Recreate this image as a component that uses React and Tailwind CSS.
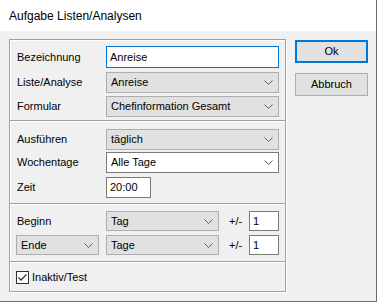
import React from 'react';

const Chevron = () => (
    <svg width="9" height="5" viewBox="0 0 9 5" className="shrink-0">
        <polyline points="0.5,0.5 4.5,4.5 8.5,0.5" fill="none" stroke="#606060" strokeWidth="1" />
    </svg>
);

const Select = ({ value, className = '', white = false }) => (
    <div
        className={`flex items-center justify-between pl-[4px] pr-[5px] border ${
            white ? 'bg-white border-[#7a7a7a]' : 'bg-[#e1e1e1] border-[#adadad]'
        } ${className}`}
    >
        <span className="leading-none">{value}</span>
        <Chevron />
    </div>
);

const Input = ({ value, className = '', focused = false }) => (
    <div
        className={`flex items-center pl-[3px] bg-white border ${
            focused ? 'border-[#0078d7]' : 'border-[#7a7a7a]'
        } ${className}`}
    >
        <span className="leading-none">{value}</span>
    </div>
);

const Separator = ({ className = '' }) => (
    <div className={`h-[2px] border-t border-[#a0a0a0] border-b border-b-white ${className}`} />
);

const Row = ({ label, children, className = '' }) => (
    <div className={`flex items-center ${className}`}>
        <span className="w-[90px] pl-[1px] shrink-0">{label}</span>
        {children}
    </div>
);

const App = () => {
    return (
        <div
            className="w-[377px] h-[302px] flex flex-col bg-[#f0f0f0] border-r border-b border-[#6b6b6b] text-[11px] text-black"
            style={{ fontFamily: '"Liberation Sans", Arial, sans-serif' }}
        >
            {/* Title */}
            <div className="h-[31px] shrink-0 bg-white flex items-center pl-[9px] text-[12px]">
                Aufgabe Listen/Analysen
            </div>

            {/* Body */}
            <div className="flex items-start pt-[8px] pl-[9px]">
                <div className="w-[277px] h-[253px] border border-[#a0a0a0] shadow-[inset_1px_1px_0_#fff,1px_1px_0_#fff] flex flex-col">
                    <div className="flex flex-col pl-[6px] pr-[6px] pt-[6px]">
                        <Row label="Bezeichnung">
                            <Input value="Anreise" focused className="flex-1 h-[22px]" />
                        </Row>
                        <Row label="Liste/Analyse" className="mt-[4px]">
                            <Select value="Anreise" className="flex-1 h-[21px]" />
                        </Row>
                        <Row label="Formular" className="mt-[3px]">
                            <Select value="Chefinformation Gesamt" className="flex-1 h-[21px]" />
                        </Row>
                    </div>
                    <Separator className="mt-[3px]" />

                    <div className="flex flex-col pl-[6px] pr-[6px] pt-[7px]">
                        <Row label="Ausführen">
                            <Select value="täglich" className="flex-1 h-[21px]" />
                        </Row>
                        <Row label="Wochentage" className="mt-[2px]">
                            <Select value="Alle Tage" white className="flex-1 h-[21px]" />
                        </Row>
                        <Row label="Zeit" className="mt-[4px]">
                            <Input value="20:00" className="w-[45px] h-[21px]" />
                        </Row>
                    </div>
                    <Separator className="mt-[5px]" />

                    <div className="flex flex-col pl-[6px] pr-[6px] pt-[6px]">
                        <Row label="Beginn">
                            <Select value="Tag" className="w-[113px] h-[20px]" />
                            <span className="ml-[10px] w-[20px]">+/-</span>
                            <Input value="1" className="w-[30px] h-[20px]" />
                        </Row>
                        <div className="flex items-center mt-[4px]">
                            <Select value="Ende" className="w-[83px] h-[20px] mr-[7px]" />
                            <Select value="Tage" className="w-[113px] h-[20px]" />
                            <span className="ml-[10px] w-[20px]">+/-</span>
                            <Input value="1" className="w-[30px] h-[20px]" />
                        </div>
                    </div>
                    <Separator className="mt-[6px]" />

                    <div className="flex-1 flex items-center pl-[6px]">
                        <div className="w-[13px] h-[13px] border border-[#333] bg-white flex items-center justify-center">
                            <svg width="11" height="11" viewBox="0 0 11 11">
                                <polyline points="1.5,5.5 4,8 9.5,2.5" fill="none" stroke="#333" strokeWidth="1.3" />
                            </svg>
                        </div>
                        <span className="ml-[3px]">Inaktiv/Test</span>
                    </div>
                </div>

                {/* Buttons */}
                <div className="flex flex-col ml-[9px] mt-[1px]">
                    <button className="w-[73px] h-[23px] bg-[#e1e1e1] border-2 border-[#0078d7] flex items-center justify-center">
                        Ok
                    </button>
                    <button className="w-[73px] h-[23px] mt-[10px] bg-[#e1e1e1] border border-[#adadad] flex items-center justify-center">
                        Abbruch
                    </button>
                </div>
            </div>
        </div>
    );
};

export default App;
